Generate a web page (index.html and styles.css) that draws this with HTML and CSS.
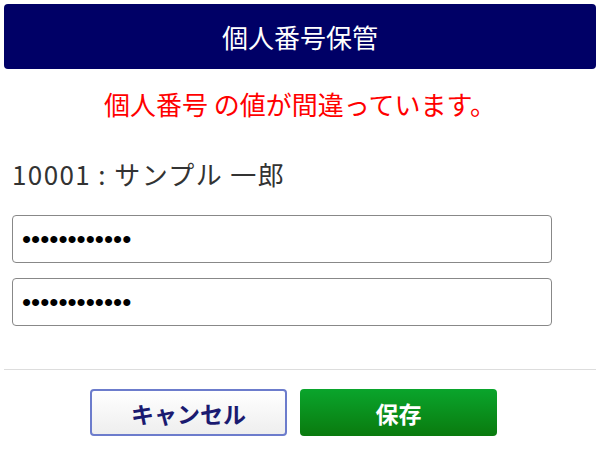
FILE: index.html
```html
<!DOCTYPE html>
<html lang="ja">
<head>
<meta charset="utf-8">
<link rel="stylesheet" href="styles.css">
</head>
<body>
<div class="page">
  <header class="title">個人番号保管</header>
  <p class="error">個人番号 の値が間違っています。</p>
  <p class="name">10001 : サンプル 一郎</p>
  <div class="fields">
    <input class="field" type="password" value="123456789012">
    <input class="field" type="password" value="123456789012">
  </div>
  <hr class="rule">
  <div class="actions">
    <button class="btn btn-cancel" type="button">キャンセル</button>
    <button class="btn btn-save" type="button">保存</button>
  </div>
</div>
</body>
</html>
```

FILE: styles.css
```css
html, body {
  margin: 0;
  padding: 0;
  background: #fff;
}
body {
  font-family: "Noto Sans CJK JP", "Noto Sans", sans-serif;
  color: #333;
}
.page {
  padding: 4px;
}
.title {
  height: 65px;
  background: #000066;
  border-radius: 4px;
  color: #fff;
  font-size: 26px;
  line-height: 65px;
  text-align: center;
}
.error {
  margin: 17px 0 0;
  color: #ff0000;
  font-size: 26px;
  line-height: 36px;
  text-align: center;
}
.name {
  margin: 34px 0 0 8px;
  font-size: 26px;
  line-height: 36px;
  letter-spacing: 1.4px;
  color: #333;
}
.fields {
  display: flex;
  flex-direction: column;
  gap: 15px;
  margin: 23px 0 0 8px;
}
.field {
  box-sizing: border-box;
  width: 540px;
  height: 48px;
  margin: 0;
  padding: 0 9px;
  border: 1px solid #888;
  border-radius: 4px;
  font-family: "Liberation Sans", sans-serif;
  font-size: 26px;
  color: #000;
}
.rule {
  margin: 43px 0 0;
  border: 0;
  border-top: 1px solid #dddddd;
}
.actions {
  display: flex;
  gap: 13px;
  margin-top: 19px;
  padding-left: 86px;
}
.btn {
  box-sizing: border-box;
  width: 197px;
  height: 47px;
  border-radius: 4px;
  font-family: "Noto Sans CJK JP", sans-serif;
  font-size: 23px;
  font-weight: bold;
  cursor: pointer;
}
.btn-cancel {
  border: 2px solid #6c7ccc;
  background: linear-gradient(#ffffff, #eeeeee);
  color: #1a1a70;
}
.btn-save {
  border: 0;
  background: linear-gradient(#0aa52c, #0a7a0e);
  color: #fff;
}
```
